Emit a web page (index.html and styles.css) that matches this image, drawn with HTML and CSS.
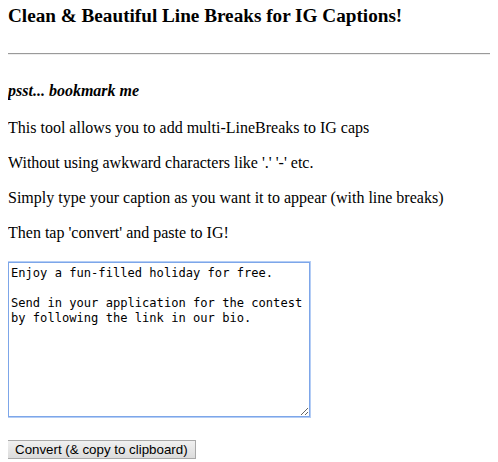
FILE: index.html
```html
<!DOCTYPE html>
<html lang="en">
<head>
	<meta charset="utf-8">
	<title>IG Line Breaks</title>
	<link rel="stylesheet" href="styles.css">
</head>
<body>

	<h3 class="title">Clean &amp; Beautiful Line Breaks for IG Captions!</h3>

	<hr>

	<h4 class="bookmark"><em>psst... bookmark me</em></h4>

	<p>This tool allows you to add multi-LineBreaks to IG caps</p>
	<p>Without using awkward characters like '.' '-' etc.</p>
	<p>Simply type your caption as you want it to appear (with line breaks)</p>
	<p>Then tap 'convert' and paste to IG!</p>

	<textarea class="caption" id="caption">Enjoy a fun-filled holiday for free.

Send in your application for the contest
by following the link in our bio.</textarea>

	<div class="actions">
		<button class="convert" onclick="convert()">Convert (&amp; copy to clipboard)</button>
	</div>

	<script>
		function convert() {
			var box = document.getElementById("caption");
			// swap empty lines for an invisible char so IG keeps them
			box.value = box.value.replace(/\n\s*\n/g, "\n\u2800\n");
			box.select();
			document.execCommand("copy");
		}
	</script>

</body>
</html>
```

FILE: styles.css
```css
body {
	margin: 0 8px;
	font-family: "Liberation Serif", "Times New Roman", serif;
	font-size: 16px;
	color: #000;
	background-color: #fff;
}

.title {
	font-size: 19.2px;
	margin: 5px 0 0 0;
}

hr {
	margin: 26px 0 0 -1px;
	border: 0;
	border-top: 1px solid #9a9a9a;
	border-bottom: 1px solid #eee;
	height: 0;
}

.bookmark {
	font-size: 16px;
	margin: 27px 0 18px 0;
}

.bookmark em {
	font-style: italic;
}

p {
	margin: 16px 0;
	line-height: 19px;
}

.caption {
	display: block;
	box-sizing: border-box;
	width: 302px;
	height: 155px;
	margin: 20px 0 0 0;
	padding: 3px 2px 2px 2px;
	border: 1px solid #7da6e9;
	outline: 1px solid #b4cdf5;
	font-family: "DejaVu Sans Mono", "Liberation Mono", monospace;
	font-size: 12.1px;
	line-height: 15px;
	color: #000;
	resize: both;
}

.actions {
	margin-top: 23px;
}

.convert {
	margin-left: -1px;
	padding: 1px 7px;
	font-family: "Liberation Sans", Arial, sans-serif;
	font-size: 13.33px;
	color: #000;
	border: 1px solid #a9a9a9;
	border-radius: 0;
	background: linear-gradient(#f0f0f0, #dcdcdc);
}
```
